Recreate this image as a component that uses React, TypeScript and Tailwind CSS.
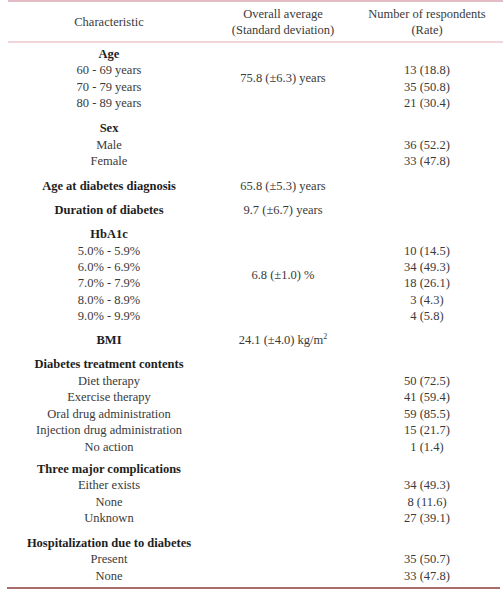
import React from 'react'

type Row = { label: string; n?: string }
type Group = { title: string; avg?: React.ReactNode; n?: string; rows: Row[]; pad: string }

const groups: Group[] = [
  {
    title: 'Age',
    avg: '75.8 (±6.3) years',
    pad: 'pt-[2.8px] pb-[4.8px]',
    rows: [
      { label: '60 - 69 years', n: '13 (18.8)' },
      { label: '70 - 79 years', n: '35 (50.8)' },
      { label: '80 - 89 years', n: '21 (30.4)' },
    ],
  },
  {
    title: 'Sex',
    pad: 'pt-[3.8px] pb-[4.8px]',
    rows: [
      { label: 'Male', n: '36 (52.2)' },
      { label: 'Female', n: '33 (47.8)' },
    ],
  },
  { title: 'Age at diabetes diagnosis', avg: '65.8 (±5.3) years', pad: 'py-[3.8px]', rows: [] },
  { title: 'Duration of diabetes', avg: '9.7 (±6.7) years', pad: 'py-[3.8px]', rows: [] },
  {
    title: 'HbA1c',
    avg: '6.8 (±1.0) %',
    pad: 'py-[3.8px]',
    rows: [
      { label: '5.0% - 5.9%', n: '10 (14.5)' },
      { label: '6.0% - 6.9%', n: '34 (49.3)' },
      { label: '7.0% - 7.9%', n: '18 (26.1)' },
      { label: '8.0% - 8.9%', n: '3 (4.3)' },
      { label: '9.0% - 9.9%', n: '4 (5.8)' },
    ],
  },
  {
    title: 'BMI',
    avg: (
      <span>
        24.1 (±4.0) kg/m<span className="relative -top-[5px] text-[8px] leading-none">2</span>
      </span>
    ),
    pad: 'py-[3.8px]',
    rows: [],
  },
  {
    title: 'Diabetes treatment contents',
    pad: 'pt-[3.8px] pb-[1.8px]',
    rows: [
      { label: 'Diet therapy', n: '50 (72.5)' },
      { label: 'Exercise therapy', n: '41 (59.4)' },
      { label: 'Oral drug administration', n: '59 (85.5)' },
      { label: 'Injection drug administration', n: '15 (21.7)' },
      { label: 'No action', n: '1 (1.4)' },
    ],
  },
  {
    title: 'Three major complications',
    pad: 'pt-[3.8px] pb-[4.8px]',
    rows: [
      { label: 'Either exists', n: '34 (49.3)' },
      { label: 'None', n: '8 (11.6)' },
      { label: 'Unknown', n: '27 (39.1)' },
    ],
  },
  {
    title: 'Hospitalization due to diabetes',
    pad: 'pt-[3.8px] pb-[2.8px]',
    rows: [
      { label: 'Present', n: '35 (50.7)' },
      { label: 'None', n: '33 (47.8)' },
    ],
  },
]

function GroupBlock({ g }: { g: Group }) {
  return (
    <div className={`flex ${g.pad}`}>
      <div className="w-[202px] flex flex-col items-center">
        <div className="h-[16.45px] leading-[16.45px] font-bold text-[#1e1e1e]">{g.title}</div>
        {g.rows.map((r, i) => (
          <div key={i} className="h-[16.45px] leading-[16.45px]">{r.label}</div>
        ))}
      </div>
      <div className="w-[146px] flex items-center justify-center leading-[16.45px]">{g.avg}</div>
      <div className="w-[142px] flex flex-col items-center">
        <div className="h-[16.45px] leading-[16.45px]">{g.n}</div>
        {g.rows.map((r, i) => (
          <div key={i} className="h-[16.45px] leading-[16.45px]">{r.n}</div>
        ))}
      </div>
    </div>
  )
}

export default function App() {
  return (
    <div className="w-[503px] h-[601px] bg-white font-['Liberation_Serif',serif] text-[12.5px] text-[#3a3a3a]">
      <div className="ml-[8px]">
        <div className="h-[2px] bg-[#e4bcc5]" />
        <div className="flex h-[39px] items-center leading-[16px]">
          <div className="w-[202px] text-center">Characteristic</div>
          <div className="w-[146px] text-center">
            Overall average
            <br />
            (Standard deviation)
          </div>
          <div className="w-[142px] text-center">
            Number of respondents
            <br />
            (Rate)
          </div>
        </div>
        <div className="h-[2px] bg-[#f0d6da]" />
        {groups.map((g, i) => (
          <GroupBlock key={i} g={g} />
        ))}
      </div>
      <div className="ml-[7px] w-[493px] h-[1.5px] bg-[#a86d6b]" />
    </div>
  )
}
